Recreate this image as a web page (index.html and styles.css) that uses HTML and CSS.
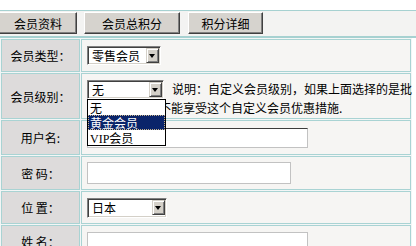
FILE: index.html
```html
<!DOCTYPE html>
<html lang="zh-CN">
<head>
    <meta charset="UTF-8">
    <title>会员资料</title>
    <link rel="stylesheet" href="styles.css">
</head>
<body>
    <div class="tabs">
        <button class="tab tab-info">会员资料</button>
        <button class="tab tab-points">会员总积分</button>
        <button class="tab tab-detail">积分详细</button>
    </div>
    <table class="member-form">
        <tr class="row-type">
            <td class="label">会员类型：</td>
            <td class="value">
                <span class="combo combo-type"><span class="combo-text">零售会员</span><span class="combo-arrow"></span></span>
            </td>
        </tr>
        <tr class="row-level">
            <td class="label">会员级别：</td>
            <td class="value value-top value-nowrap"><span class="combo combo-level"><span class="combo-text">无</span><span class="combo-arrow"></span>
                    <span class="combo-list">
                        <span class="combo-item">无</span>
                        <span class="combo-item selected">黄金会员</span>
                        <span class="combo-item"><span class="latin">VIP</span>会员</span>
                    </span>
                </span><span class="note">说明：自定义会员级别，如果上面选择的是批<br>发会员，那么不能享受这个自定义会员优惠措施.</span></td>
        </tr>
        <tr class="row-user">
            <td class="label">用户名:</td>
            <td class="value"><input class="field field-user" type="text"></td>
        </tr>
        <tr class="row-pass">
            <td class="label">密&nbsp;码：</td>
            <td class="value"><input class="field field-pass" type="password"></td>
        </tr>
        <tr class="row-place">
            <td class="label">位&nbsp;置：</td>
            <td class="value">
                <span class="combo combo-place"><span class="combo-text">日本</span><span class="combo-arrow"></span></span>
            </td>
        </tr>
        <tr class="row-name">
            <td class="label">姓&nbsp;名：</td>
            <td class="value value-top"><input class="field field-name" type="text"></td>
        </tr>
    </table>
</body>
</html>
```

FILE: styles.css
```css
body {
    margin: 10px 0 0;
    font-family: "Noto Sans CJK SC", sans-serif;
    font-size: 12px;
    line-height: 15px;
    color: #000;
    background: #fff;
    overflow: hidden;
}
.tabs {
    display: flex;
    height: 24px;
    padding-top: 1px;
    background: #f3f3f2;
    border-top: 1px solid #a6d1d1;
    border-bottom: 2px solid #a6d1d1;
}
.tab {
    height: 22px;
    padding: 0;
    font: inherit;
    color: #000;
    background: #d6d3ce;
    border: 1px solid;
    border-color: #fff #404040 #404040 #fff;
    box-shadow: inset -1px -1px #808080;
}
.tab-info {
    width: 78px;
    margin-left: -1px;
    margin-right: 7px;
}
.tab-points {
    width: 96px;
    margin-right: 8px;
}
.tab-detail {
    width: 75px;
}
.member-form {
    width: 412px;
    table-layout: fixed;
    border-spacing: 1px;
    background: #f3f6f6;
}
.member-form td {
    box-sizing: border-box;
    border: 1px solid #a9d3d3;
    padding: 0 5px;
}
.row-type { height: 33px; }
.row-level { height: 46px; }
.row-user { height: 35px; }
.row-pass { height: 34px; }
.row-place { height: 33px; }
.row-name { height: 33px; }
.member-form .label {
    width: 79px;
    padding: 0;
    text-align: center;
    background: #dddbdb;
}
.value {
    background: #f6f5f3;
}
.member-form .value-top {
    vertical-align: top;
    padding-top: 6px;
}
.value-nowrap {
    white-space: nowrap;
}
.combo {
    position: relative;
    display: inline-flex;
    align-items: center;
    box-sizing: border-box;
    height: 19px;
    background: #fff;
    border: 1px solid;
    border-color: #808080 #fff #fff #808080;
    box-shadow: inset 1px 1px #404040, inset -1px -1px #d4d0c8;
    vertical-align: middle;
}
.combo-type { width: 74px; }
.combo-level { width: 77px; vertical-align: top; }
.combo-place { width: 80px; height: 20px; }
.combo-text {
    padding-left: 4px;
    white-space: nowrap;
}
.combo-arrow {
    position: relative;
    box-sizing: border-box;
    width: 13px;
    height: 15px;
    margin-left: auto;
    margin-right: 1px;
    background: #d4d0c8;
    border: 1px solid;
    border-color: #d4d0c8 #404040 #404040 #d4d0c8;
    box-shadow: inset 1px 1px #fff, inset -1px -1px #808080;
}
.combo-arrow::after {
    content: "";
    position: absolute;
    left: 2px;
    top: 5px;
    border-left: 3.5px solid transparent;
    border-right: 3.5px solid transparent;
    border-top: 4px solid #000;
}
.combo-list {
    position: absolute;
    left: -1px;
    top: 18px;
    z-index: 2;
    width: 77px;
    background: #fff;
    border: 1px solid #000;
}
.combo-item {
    display: block;
    height: 15px;
    line-height: 15px;
    padding-left: 2px;
    white-space: nowrap;
}
.combo-item.selected {
    color: #fff;
    background: #0a246a;
    outline: 1px dotted #c8b48a;
    outline-offset: -1px;
}
.latin {
    font-family: "Liberation Serif", serif;
}
.note {
    margin-left: 8px;
    line-height: 17px;
}
.field {
    display: block;
    box-sizing: border-box;
    height: 20px;
    background: #fff;
    border: 1px solid #c2c2c2;
}
.field-user {
    width: 221px;
    border-top-color: #3c3c3c;
}
.field-pass {
    width: 204px;
    height: 22px;
}
.field-name {
    width: 221px;
}
```
